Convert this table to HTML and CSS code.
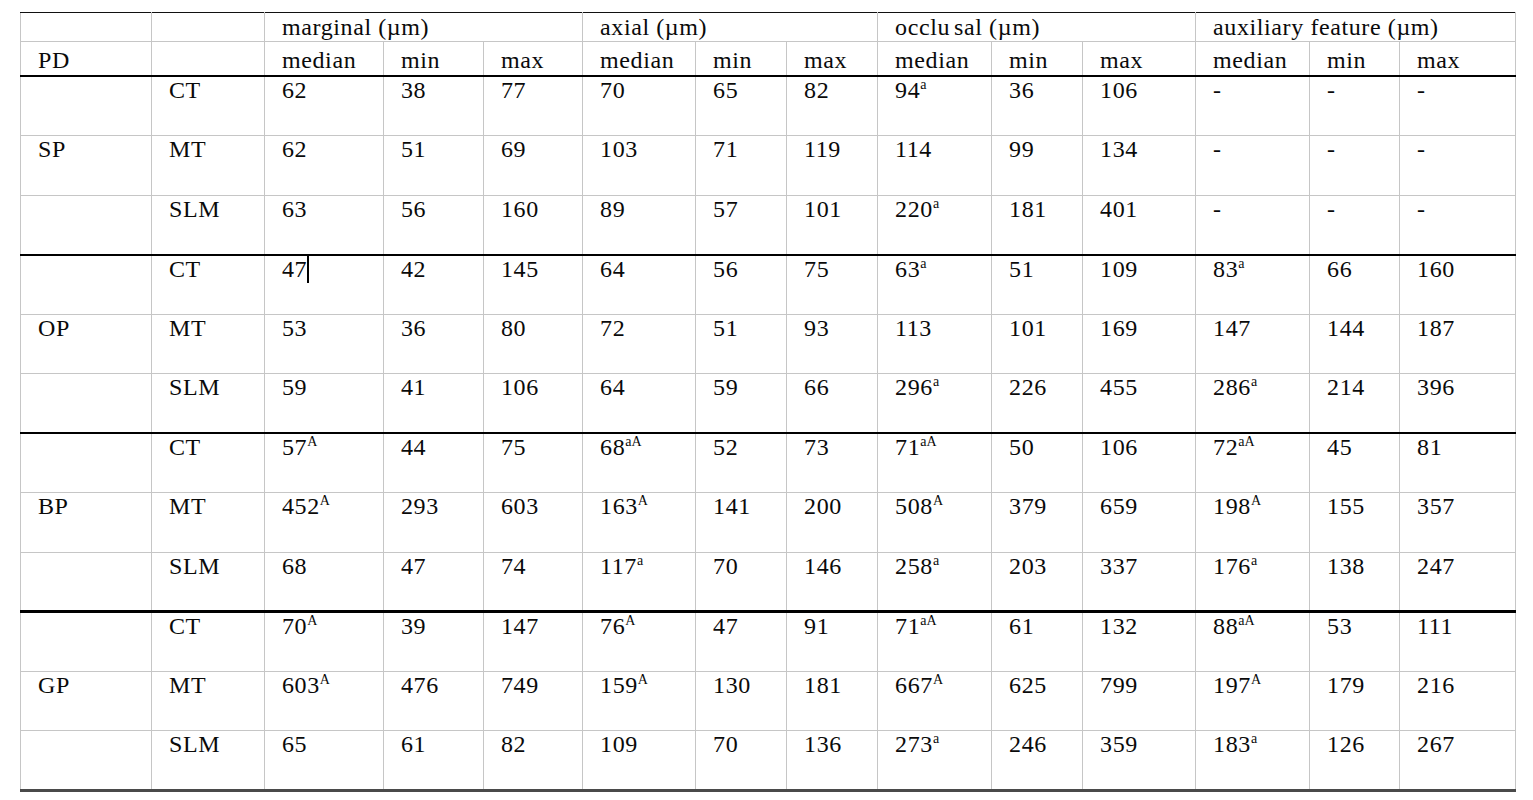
FILE: index.html
```html
<!DOCTYPE html>
<html lang="en">
<head>
<meta charset="utf-8">
<title>Gap measurements</title>
<link rel="stylesheet" href="styles.css">
</head>
<body>
<table class="data">
  <colgroup>
    <col class="c-pd"><col class="c-tech">
    <col class="c-med"><col class="c-min"><col class="c-max">
    <col class="c-med2"><col class="c-min2"><col class="c-max2">
    <col class="c-med3"><col class="c-min3"><col class="c-max3">
    <col class="c-med4"><col class="c-min4"><col class="c-max4">
  </colgroup>
  <thead>
    <tr class="h1">
      <th></th><th></th>
      <th colspan="3">marginal (µm)</th>
      <th colspan="3">axial (µm)</th>
      <th colspan="3">occlu<span class="gap"></span>sal (µm)</th>
      <th colspan="3">auxiliary feature (µm)</th>
    </tr>
    <tr class="h2">
      <th>PD</th><th></th>
      <th>median</th><th>min</th><th>max</th>
      <th>median</th><th>min</th><th>max</th>
      <th>median</th><th>min</th><th>max</th>
      <th>median</th><th>min</th><th>max</th>
    </tr>
  </thead>
  <tbody class="grp">
    <tr><td></td><td>CT</td><td>62</td><td>38</td><td>77</td><td>70</td><td>65</td><td>82</td><td>94<sup>a</sup></td><td>36</td><td>106</td><td>-</td><td>-</td><td>-</td></tr>
    <tr><td>SP</td><td>MT</td><td>62</td><td>51</td><td>69</td><td>103</td><td>71</td><td>119</td><td>114</td><td>99</td><td>134</td><td>-</td><td>-</td><td>-</td></tr>
    <tr><td></td><td>SLM</td><td>63</td><td>56</td><td>160</td><td>89</td><td>57</td><td>101</td><td>220<sup>a</sup></td><td>181</td><td>401</td><td>-</td><td>-</td><td>-</td></tr>
  </tbody>
  <tbody class="grp">
    <tr><td></td><td>CT</td><td>47<span class="caret"></span></td><td>42</td><td>145</td><td>64</td><td>56</td><td>75</td><td>63<sup>a</sup></td><td>51</td><td>109</td><td>83<sup>a</sup></td><td>66</td><td>160</td></tr>
    <tr><td>OP</td><td>MT</td><td>53</td><td>36</td><td>80</td><td>72</td><td>51</td><td>93</td><td>113</td><td>101</td><td>169</td><td>147</td><td>144</td><td>187</td></tr>
    <tr><td></td><td>SLM</td><td>59</td><td>41</td><td>106</td><td>64</td><td>59</td><td>66</td><td>296<sup>a</sup></td><td>226</td><td>455</td><td>286<sup>a</sup></td><td>214</td><td>396</td></tr>
  </tbody>
  <tbody class="grp">
    <tr><td></td><td>CT</td><td>57<sup>A</sup></td><td>44</td><td>75</td><td>68<sup>aA</sup></td><td>52</td><td>73</td><td>71<sup>aA</sup></td><td>50</td><td>106</td><td>72<sup>aA</sup></td><td>45</td><td>81</td></tr>
    <tr><td>BP</td><td>MT</td><td>452<sup>A</sup></td><td>293</td><td>603</td><td>163<sup>A</sup></td><td>141</td><td>200</td><td>508<sup>A</sup></td><td>379</td><td>659</td><td>198<sup>A</sup></td><td>155</td><td>357</td></tr>
    <tr><td></td><td>SLM</td><td>68</td><td>47</td><td>74</td><td>117<sup>a</sup></td><td>70</td><td>146</td><td>258<sup>a</sup></td><td>203</td><td>337</td><td>176<sup>a</sup></td><td>138</td><td>247</td></tr>
  </tbody>
  <tbody class="grp last">
    <tr><td></td><td>CT</td><td>70<sup>A</sup></td><td>39</td><td>147</td><td>76<sup>A</sup></td><td>47</td><td>91</td><td>71<sup>aA</sup></td><td>61</td><td>132</td><td>88<sup>aA</sup></td><td>53</td><td>111</td></tr>
    <tr><td>GP</td><td>MT</td><td>603<sup>A</sup></td><td>476</td><td>749</td><td>159<sup>A</sup></td><td>130</td><td>181</td><td>667<sup>A</sup></td><td>625</td><td>799</td><td>197<sup>A</sup></td><td>179</td><td>216</td></tr>
    <tr><td></td><td>SLM</td><td>65</td><td>61</td><td>82</td><td>109</td><td>70</td><td>136</td><td>273<sup>a</sup></td><td>246</td><td>359</td><td>183<sup>a</sup></td><td>126</td><td>267</td></tr>
  </tbody>
</table>
</body>
</html>
```

FILE: styles.css
```css
html, body {
  margin: 0;
  padding: 0;
  background: #ffffff;
}

body {
  padding: 12px 0 0 20px;
  font-family: "Liberation Serif", "Times New Roman", serif;
  color: #0a0a0a;
}

.data {
  border-collapse: collapse;
  table-layout: fixed;
  width: 1495px;
  font-size: 24px;
  letter-spacing: 0.6px;
}

.c-pd { width: 131px; }
.c-tech { width: 113px; }
.c-med { width: 119px; }
.c-min { width: 100px; }
.c-max { width: 99px; }
.c-med2 { width: 113px; }
.c-min2 { width: 91px; }
.c-max2 { width: 91px; }
.c-med3 { width: 114px; }
.c-min3 { width: 91px; }
.c-max3 { width: 113px; }
.c-med4 { width: 114px; }
.c-min4 { width: 90px; }
.c-max4 { width: 116px; }

.data th,
.data td {
  border: 1px solid #c6c6c6;
  text-align: left;
  vertical-align: top;
  font-weight: normal;
  padding: 2px 4px 0 17px;
  line-height: 27px;
  white-space: nowrap;
  overflow: visible;
}

.data thead tr.h1 th {
  border-top: 1px solid #111111;
  height: 27px;
  padding-top: 1px;
}

.data thead tr.h2 th {
  height: 28px;
  padding-top: 5px;
  border-bottom: 2px solid #000000;
}

.data tbody tr {
  height: 59.5px;
}

.data tbody td {
  padding-top: 0;
}

.data tbody.grp tr:last-child td {
  border-bottom: 2px solid #000000;
}

.data tbody.grp:nth-of-type(3) tr:last-child td {
  border-bottom: 3px solid #000000;
}

.data tbody.last tr:last-child td {
  border-bottom: 3px solid #4a4a4a;
}

.data sup {
  font-size: 14px;
  letter-spacing: 0;
  line-height: 0;
  vertical-align: 9px;
}

.gap {
  display: inline-block;
  width: 4px;
}

.caret {
  display: inline-block;
  width: 2px;
  height: 28px;
  background: #000000;
  vertical-align: -6px;
  margin-top: -3px;
}
```
